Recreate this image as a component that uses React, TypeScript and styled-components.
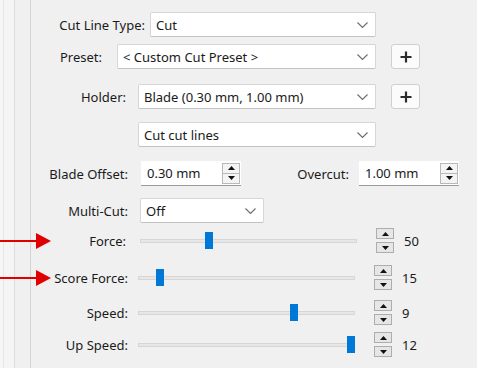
import styled, { createGlobalStyle } from "styled-components";

const GlobalStyle = createGlobalStyle`
  html, body {
    margin: 0;
    padding: 0;
    background: #f0f0f0;
    font-family: "Noto Sans", "Open Sans", sans-serif;
    font-size: 13px;
    color: #1a1a1a;
  }
`;

type SliderItem = { label: string; labelW: number; gap: number; top: number; value: number; pos: number; arrow?: boolean };

const sliders: SliderItem[] = [
  { label: "Force:", labelW: 95, gap: 12, top: 5, value: 50, pos: 0.31, arrow: true },
  { label: "Score Force:", labelW: 97, gap: 10, top: 12, value: 15, pos: 0.088, arrow: true },
  { label: "Speed:", labelW: 97, gap: 10, top: 10, value: 9, pos: 0.725 },
  { label: "Up Speed:", labelW: 97, gap: 10, top: 7, value: 12, pos: 1 },
];

const Chevron = () => (
  <ChevronIcon width="11" height="6" viewBox="0 0 11 6">
    <path d="M0.5 0.5 L5.5 5.5 L10.5 0.5" fill="none" stroke="#6b6b6b" strokeWidth="1.1" />
  </ChevronIcon>
);

const Plus = () => (
  <PlusButton>
    <svg width="12" height="12" viewBox="0 0 12 12">
      <path d="M6 0.5 V11.5 M0.5 6 H11.5" stroke="#2b2b2b" strokeWidth="2.2" />
    </svg>
  </PlusButton>
);

const Select: React.FC<{ text: string; w: number; ml: number }> = ({ text, w, ml }) => (
  <SelectBox $w={w} $ml={ml}>
    <span>{text}</span>
    <Chevron />
  </SelectBox>
);

const Tri: React.FC<{ down?: boolean }> = ({ down }) => (
  <svg width="7" height="4" viewBox="0 0 7 4">
    <path d={down ? "M0 0 H7 L3.5 4 Z" : "M0 4 H7 L3.5 0 Z"} fill="#111" />
  </svg>
);

const Spin: React.FC<{ text: string; ml: number }> = ({ text, ml }) => (
  <SpinField $ml={ml}>
    <span>{text}</span>
    <SpinCtl>
      <SpinHalf><Tri /></SpinHalf>
      <SpinHalf><Tri down /></SpinHalf>
    </SpinCtl>
  </SpinField>
);

const Arrow = () => (
  <ArrowMark width="52" height="18" viewBox="0 0 52 18">
    <path d="M0 9 H38" stroke="#e00000" strokeWidth="2" />
    <path d="M36 1 L51 9 L36 17 Z" fill="#e00000" />
  </ArrowMark>
);

export default function App() {
  return (
    <>
      <GlobalStyle />
      <Page>
        <Strip />
        <Panel>
          <Row $top={12}>
            <Label $w={114}>Cut Line Type:</Label>
            <Select text="Cut" w={226} ml={5} />
          </Row>
          <Row $top={7}>
            <Label $w={71}>Preset:</Label>
            <Select text="< Custom Cut Preset >" w={259} ml={15} />
            <Plus />
          </Row>
          <Row $top={15}>
            <Label $w={95}>Holder:</Label>
            <Select text="Blade (0.30 mm, 1.00 mm)" w={238} ml={12} />
            <Plus />
          </Row>
          <Row $top={13}>
            <Label $w={95} />
            <Select text="Cut cut lines" w={238} ml={12} />
          </Row>
          <Row $top={14}>
            <Label $w={97}>Blade Offset:</Label>
            <Spin text="0.30 mm" ml={13} />
            <Label $w={108}>Overcut:</Label>
            <Spin text="1.00 mm" ml={10} />
          </Row>
          <Row $top={12}>
            <Label $w={97}>Multi-Cut:</Label>
            <Select text="Off" w={124} ml={12} />
          </Row>
          {sliders.map((s) => (
            <Row key={s.label} $top={s.top}>
              {s.arrow && <Arrow />}
              <Label $w={s.labelW}>{s.label}</Label>
              <Track $ml={s.gap + (97 - s.labelW)}>
                <Rail />
                <Thumb style={{ left: `${s.pos * 209}px` }} />
              </Track>
              <StepPair>
                <StepBtn><Tri /></StepBtn>
                <StepBtn><Tri down /></StepBtn>
              </StepPair>
              <Value>{s.value}</Value>
            </Row>
          ))}
        </Panel>
      </Page>
    </>
  );
}

const Page = styled.div`
  display: flex;
  width: 477px;
  height: 368px;
  overflow: hidden;
`;

const Strip = styled.div`
  width: 30px;
  flex-shrink: 0;
  border-right: 1px solid #d4d4d4;
  background: linear-gradient(
    to right,
    #f6f6f6 0px,
    #f6f6f6 3px,
    #e6e6e6 3px,
    #e6e6e6 4px,
    #f5f5f5 4px,
    #f5f5f5 14px,
    #dedede 14px,
    #dedede 15px,
    #f0f0f0 15px
  );
`;

const Panel = styled.div`
  display: flex;
  flex-direction: column;
  flex: 1;
`;

const Row = styled.div<{ $top: number }>`
  position: relative;
  display: flex;
  align-items: center;
  height: 25px;
  margin-top: ${(p) => p.$top}px;
`;

const Label = styled.div<{ $w: number }>`
  width: ${(p) => p.$w}px;
  flex-shrink: 0;
  text-align: right;
  white-space: nowrap;
`;

const SelectBox = styled.div<{ $w: number; $ml: number }>`
  box-sizing: border-box;
  width: ${(p) => p.$w}px;
  height: 25px;
  margin-left: ${(p) => p.$ml}px;
  display: flex;
  align-items: center;
  justify-content: space-between;
  padding: 0 7px 0 5px;
  background: #fff;
  border: 1px solid #d6d6d6;
  border-bottom-color: #c2c2c2;
  border-radius: 2px;
  white-space: nowrap;
`;

const ChevronIcon = styled.svg`
  flex-shrink: 0;
`;

const PlusButton = styled.div`
  box-sizing: border-box;
  width: 29px;
  height: 25px;
  margin-left: 15px;
  display: flex;
  align-items: center;
  justify-content: center;
  background: #fbfbfb;
  border: 1px solid #cfcfcf;
  border-radius: 3px;
`;

const SpinField = styled.div<{ $ml: number }>`
  box-sizing: border-box;
  width: 100px;
  height: 25px;
  margin-left: ${(p) => p.$ml}px;
  display: flex;
  align-items: center;
  justify-content: space-between;
  padding: 0 1px 0 6px;
  background: #fff;
  border-bottom: 1px solid #9a9a9a;
`;

const SpinCtl = styled.div`
  display: flex;
  flex-direction: column;
  width: 18px;
  height: 21px;
  box-sizing: border-box;
  border: 1px solid #b9b9b9;
  background: #f4f4f4;
`;

const SpinHalf = styled.div`
  flex: 1;
  display: flex;
  align-items: center;
  justify-content: center;
  & + & {
    border-top: 1px solid #b9b9b9;
  }
`;

const Track = styled.div<{ $ml: number }>`
  position: relative;
  width: 217px;
  height: 17px;
  margin-left: ${(p) => p.$ml}px;
  display: flex;
  align-items: center;
`;

const Rail = styled.div`
  width: 100%;
  height: 4px;
  box-sizing: border-box;
  background: #e7e7e7;
  border: 1px solid #d6d6d6;
`;

const Thumb = styled.div`
  position: absolute;
  top: 0;
  width: 8px;
  height: 17px;
  background: #0078d7;
`;

const StepPair = styled.div`
  display: flex;
  flex-direction: column;
  gap: 3px;
  margin-left: 19px;
`;

const StepBtn = styled.div`
  box-sizing: border-box;
  width: 18px;
  height: 11px;
  display: flex;
  align-items: center;
  justify-content: center;
  background: #e6e6e6;
  border: 1px solid #adadad;
`;

const Value = styled.div`
  margin-left: 10px;
`;

const ArrowMark = styled.svg`
  position: absolute;
  left: -31px;
  top: 50%;
  margin-top: -9px;
`;
